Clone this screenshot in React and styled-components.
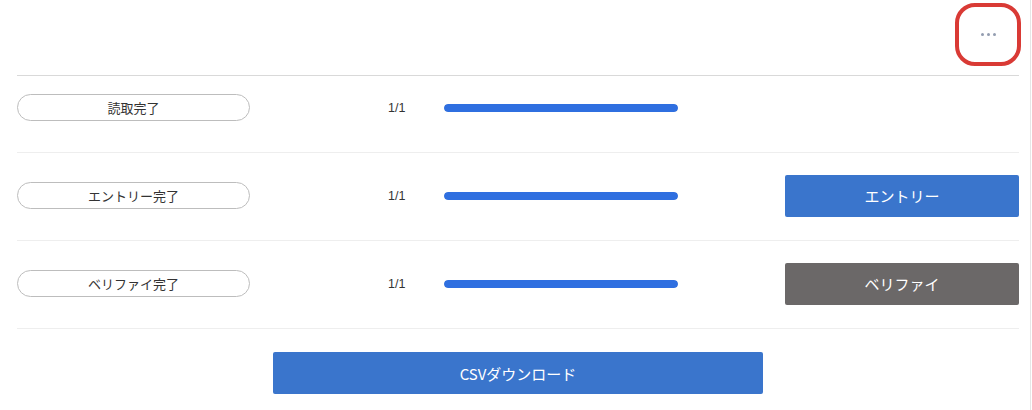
import React from 'react';
import styled, { createGlobalStyle } from 'styled-components';

const GlobalStyle = createGlobalStyle`
  html, body {
    margin: 0;
    padding: 0;
    background: #ffffff;
  }
  body {
    font-family: "Noto Sans CJK JP", "Noto Sans", sans-serif;
    color: #333333;
  }
`;

const Page = styled.div`
  width: 1031px;
  height: 410px;
  box-sizing: border-box;
  border-right: 1px solid #e6e6e6;
  padding: 0 11px 0 17px;
`;

const Header = styled.div`
  height: 76px;
  display: flex;
  align-items: center;
  justify-content: flex-end;
  border-bottom: 1px solid #d9d9d9;
  box-sizing: border-box;
`;

const MenuButton = styled.button`
  width: 66px;
  height: 63px;
  margin-right: -2px;
  margin-top: -6px;
  box-sizing: border-box;
  border: 4px solid #d93a35;
  border-radius: 20px;
  background: #ffffff;
  display: flex;
  align-items: center;
  justify-content: center;
  gap: 3px;
  padding: 0;
`;

const Dot = styled.span`
  width: 3px;
  height: 3px;
  border-radius: 50%;
  background: #939db0;
`;

const Row = styled.div`
  display: flex;
  align-items: center;
  height: 41px;
  padding: ${p => (p.$first ? '11px' : '22px')} 0 24px;
  border-bottom: 1px solid #eeeeee;
`;

const Status = styled.div`
  width: 233px;
  height: 27px;
  box-sizing: border-box;
  border: 1px solid #bdbdbd;
  border-radius: 14px;
  display: flex;
  align-items: center;
  justify-content: center;
  font-size: 13px;
  color: #333333;
`;

const Count = styled.div`
  width: 56px;
  margin-left: 138px;
  font-family: "Liberation Sans", Arial, sans-serif;
  font-size: 12.5px;
  color: #333333;
`;

const Track = styled.div`
  width: 234px;
  height: 8px;
  border-radius: 4px;
  background: #e8e8e8;
  overflow: hidden;
`;

const Fill = styled.div`
  height: 100%;
  border-radius: 4px;
  background: #2f6fe0;
`;

const Action = styled.button`
  margin-left: auto;
  width: 234px;
  height: 42px;
  border: none;
  border-radius: 2px;
  background: ${p => (p.$variant === 'gray' ? '#6b6868' : '#3a75cc')};
  color: #ffffff;
  font-family: "Noto Sans CJK JP", "Noto Sans", sans-serif;
  font-size: 15px;
  cursor: pointer;
`;

const Footer = styled.div`
  display: flex;
  justify-content: center;
  padding-top: 23px;
`;

const CsvButton = styled(Action)`
  margin-left: 0;
  width: 490px;
`;

const rows = [
  { label: '読取完了', done: 1, total: 1 },
  { label: 'エントリー完了', done: 1, total: 1, action: 'エントリー', variant: 'blue' },
  { label: 'ベリファイ完了', done: 1, total: 1, action: 'ベリファイ', variant: 'gray' },
];

export default function App() {
  return (
    <>
      <GlobalStyle />
      <Page>
        <Header>
          <MenuButton aria-label="menu">
            <Dot />
            <Dot />
            <Dot />
          </MenuButton>
        </Header>
        {rows.map((r, i) => (
          <Row key={r.label} $first={i === 0}>
            <Status>{r.label}</Status>
            <Count>{r.done}/{r.total}</Count>
            <Track>
              <Fill style={{ width: `${(r.done / r.total) * 100}%` }} />
            </Track>
            {r.action && <Action $variant={r.variant}>{r.action}</Action>}
          </Row>
        ))}
        <Footer>
          <CsvButton>CSVダウンロード</CsvButton>
        </Footer>
      </Page>
    </>
  );
}
